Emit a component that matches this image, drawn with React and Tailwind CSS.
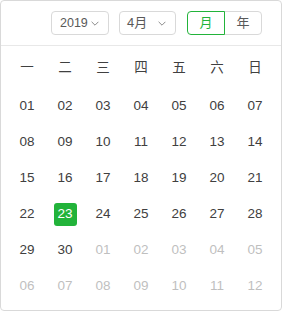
import { useState } from "react";

const font = { fontFamily: '"Liberation Sans", "Noto Sans CJK SC", sans-serif' };

function Chevron() {
  return (
    <svg width="8" height="5" viewBox="0 0 8 5" className="shrink-0">
      <path d="M0.6 0.8 L4 4.2 L7.4 0.8" fill="none" stroke="#8c8c8c" strokeWidth="1" />
    </svg>
  );
}

export default function App() {
  const [mode, setMode] = useState("month");

  const weekdays = ["一", "二", "三", "四", "五", "六", "日"];
  const days = [];
  for (let d = 1; d <= 30; d++) days.push({ label: String(d).padStart(2, "0"), current: true });
  for (let d = 1; d <= 12; d++) days.push({ label: String(d).padStart(2, "0"), current: false });
  const rows = [];
  for (let i = 0; i < 6; i++) rows.push(days.slice(i * 7, i * 7 + 7));

  return (
    <div className="w-[282px] h-[311px] bg-white" style={font}>
      <div className="w-[282px] h-[311px] border border-[#d9d9d9] rounded-[4px] flex flex-col">
        {/* Header */}
        <div className="flex items-center justify-end py-[10px] pr-[19px] border-b border-[#e8e8e8] text-[13px]">
          <div className="w-[58px] h-[24px] border border-[#d9d9d9] rounded-[4px] flex items-center justify-between pl-[8px] pr-[9px] text-[#595959]">
            <span className="text-[12.5px]">2019</span>
            <Chevron />
          </div>
          <div className="ml-[10px] w-[57px] h-[24px] border border-[#d9d9d9] rounded-[4px] flex items-center justify-between pl-[7px] pr-[9px] text-[#595959]">
            <span>4月</span>
            <Chevron />
          </div>
          <div className="ml-[11px] flex h-[24px]">
            <button
              onClick={() => setMode("month")}
              className={`w-[38px] h-[24px] rounded-l-[4px] border flex items-center justify-center ${
                mode === "month" ? "border-[#22b33a] text-[#22b33a] z-10" : "border-[#d9d9d9] text-[#595959]"
              }`}
            >
              月
            </button>
            <button
              onClick={() => setMode("year")}
              className={`w-[38px] h-[24px] -ml-px rounded-r-[4px] border flex items-center justify-center ${
                mode === "year" ? "border-[#22b33a] text-[#22b33a] z-10" : "border-[#d9d9d9] text-[#595959]"
              }`}
            >
              年
            </button>
          </div>
        </div>

        {/* Body */}
        <div className="pt-[3px] pl-[7px] text-[13.5px]">
          <div className="grid grid-cols-[repeat(7,38px)] h-[39px] items-center text-[#404040]">
            {weekdays.map((w) => (
              <div key={w} className="text-center">{w}</div>
            ))}
          </div>
          {rows.map((row, ri) => (
            <div key={ri} className="grid grid-cols-[repeat(7,38px)] h-[36px] items-center">
              {row.map((d, ci) => {
                const selected = d.current && d.label === "23";
                return (
                  <div key={ci} className="flex justify-center">
                    <div
                      className={`min-w-[23px] h-[23px] px-[1px] rounded-[3px] flex items-center justify-center ${
                        selected
                          ? "bg-[#22b33a] text-white"
                          : d.current
                          ? "text-[#404040]"
                          : "text-[#bfbfbf]"
                      }`}
                    >
                      {d.label}
                    </div>
                  </div>
                );
              })}
            </div>
          ))}
        </div>
      </div>
    </div>
  );
}
